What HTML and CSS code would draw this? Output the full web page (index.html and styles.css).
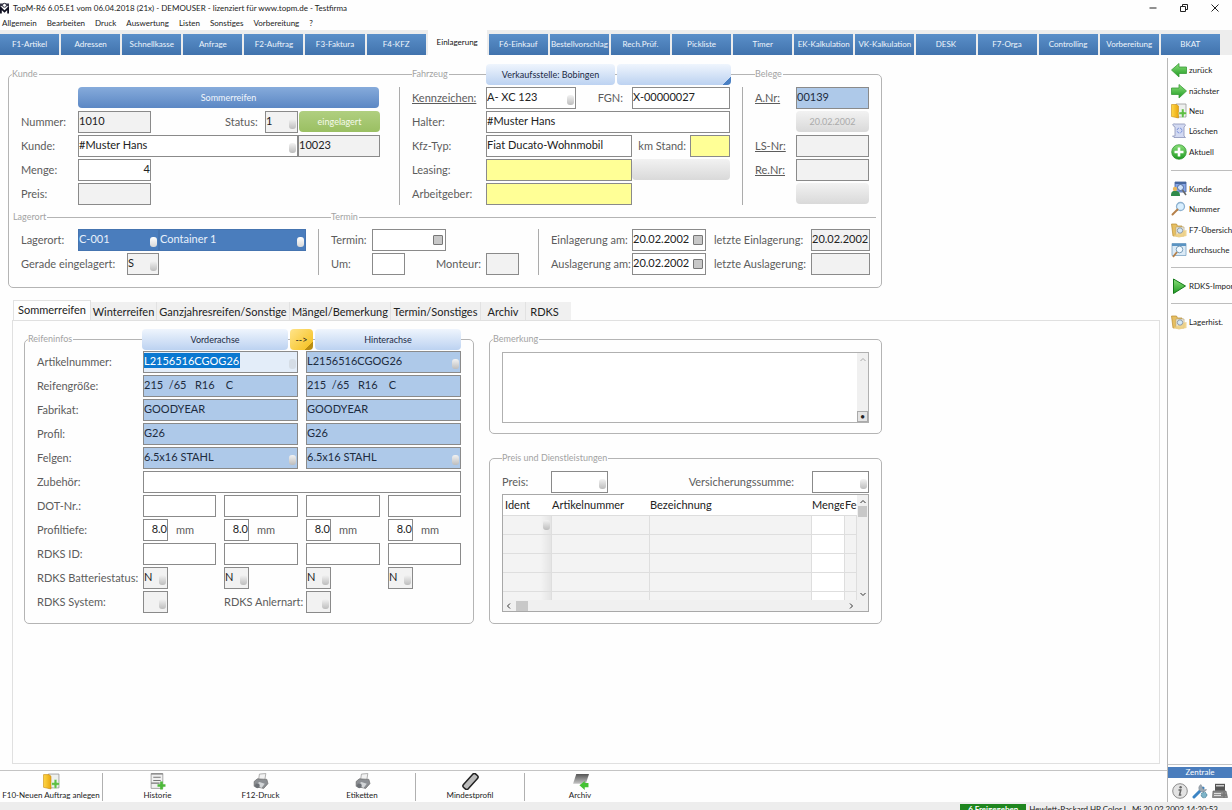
FILE: index.html
```html
<!DOCTYPE html>
<html lang="de">
<head>
<meta charset="utf-8">
<title>TopM-R6 – Einlagerung</title>
<link rel="stylesheet" href="styles.css">
</head>
<body>
<svg class="defs" aria-hidden="true">
  <defs>
    <linearGradient id="g-green" x1="0" y1="0" x2="0" y2="1"><stop offset="0" stop-color="#8be07a"/><stop offset="1" stop-color="#1f9a22"/></linearGradient>
    <linearGradient id="g-yellow" x1="0" y1="0" x2="1" y2="0"><stop offset="0" stop-color="#ffd84a"/><stop offset="1" stop-color="#e9a70e"/></linearGradient>
    <linearGradient id="g-grey" x1="0" y1="0" x2="0" y2="1"><stop offset="0" stop-color="#555"/><stop offset="1" stop-color="#c4c4c4"/></linearGradient>
  </defs>
  <symbol id="i-back" viewBox="0 0 16 16"><path d="M.5 8 8 1.5V5h7.5v6.500H8V15z" fill="url(#g-green)" stroke="#3a9a38" stroke-width=".8"/></symbol>
  <symbol id="i-next" viewBox="0 0 16 16"><path d="M15.500 8 8 1.500V5H.5v6.500H8V15z" fill="url(#g-green)" stroke="#3a9a38" stroke-width=".8"/></symbol>
  <symbol id="i-new" viewBox="0 0 16 16"><path d="M5 1h10v13H5z" fill="#eef0ee" stroke="#9a9a9a" stroke-width=".8"/><path d="M.5 1.500h5l2 1.500v12l-7-1.500z" fill="url(#g-yellow)" stroke="#c98e12" stroke-width=".6"/><path d="M10.500 6H13v3h2.500v2.500H13v3h-2.500v-3H8V9h2.500z" fill="#5fbf45" stroke="#fff" stroke-width=".4"/></symbol>
  <symbol id="i-delete" viewBox="0 0 16 16"><path d="M2 2.500C1 1 3 .5 4 1h8c2-.5 3 1 2 2l-1 1v9l1.500 1.500H3L1.500 13H4V4z" fill="#d3daf2" stroke="#8a93b8" stroke-width=".8"/><circle cx="8.500" cy="7.500" r="2.500" fill="none" stroke="#7f96dc" stroke-dasharray="3 1"/></symbol>
  <symbol id="i-plus" viewBox="0 0 16 16"><circle cx="8" cy="8" r="7.300" fill="url(#g-green)" stroke="#2b8f2b" stroke-width=".7"/><path d="M8 3.500v9M3.500 8h9" stroke="#fff" stroke-width="2.600"/></symbol>
  <symbol id="i-customer" viewBox="0 0 16 16"><path d="M4 1h11v10H4z" fill="#86a6e8" stroke="#44609c" stroke-width=".8"/><path d="M4 1h11v2H4z" fill="#46679f"/><circle cx="9.500" cy="6.500" r="3" fill="#cfe2fb" stroke="#50699a"/><path d="m11.500 9 3.500 5" stroke="#666" stroke-width="1.500"/><circle cx="4" cy="8" r="2.200" fill="#e9b65c"/><path d="M0 15c0-5 2-5 4-5s5 0 5 5z" fill="#2f8a4b"/></symbol>
  <symbol id="i-search" viewBox="0 0 16 16"><circle cx="9.500" cy="5.500" r="4" fill="#d8efff" stroke="#8fb2d0" stroke-width="1.300"/><path d="m6.500 8.500-5 5" stroke="#b5804a" stroke-width="2" stroke-linecap="round"/></symbol>
  <symbol id="i-folder" viewBox="0 0 16 16"><path d="M.5 2h5l1 2H11v9L2 14z" fill="#e6bf62" stroke="#b88a2e" stroke-width=".7"/><path d="M5 5h8v9H5z" fill="#f5f0e2" stroke="#b5a77f" stroke-width=".7"/><path d="m11 9 4.500-1v6L8 15.500 2 14z" fill="#efcf7f" opacity=".85"/><circle cx="9" cy="8.500" r="2.700" fill="#d3e8f7" stroke="#8e9aa8"/></symbol>
  <symbol id="i-browse" viewBox="0 0 16 16"><path d="M1 1.500h14v12H1z" fill="#dbeaf6" stroke="#7ea4c4" stroke-width=".8"/><path d="M1 1.500h14v2.500H1z" fill="#5a93c2"/><circle cx="8.500" cy="7.500" r="3.300" fill="#f3faff" stroke="#7c9fba"/><path d="m6 10-4 5" stroke="#b5804a" stroke-width="1.800"/></symbol>
  <symbol id="i-play" viewBox="0 0 16 16"><path d="M2.500 1v14.500L14.500 8z" fill="url(#g-green)" stroke="#157a1a"/></symbol>
  <symbol id="i-history" viewBox="0 0 16 16"><path d="M2 .5h11v14H2z" fill="#f0f0f0" stroke="#999" stroke-width=".8"/><path d="M2 1h11M4 4h7M4 7h7M2 9.500h8" stroke="#777"/><path d="M10.500 8h2.500v2.500h2.500V13H13v2.500h-2.500V13H8v-2.500h2.500z" fill="#4db83a"/></symbol>
  <symbol id="i-print" viewBox="0 0 16 16"><path d="m7 1 6-.5-1 6.500-6 .5z" fill="#f2f2f2" stroke="#999" stroke-width=".7"/><path d="m2 8 3-2.500 9 .5 1 4-4 4.500-9-2z" fill="#8d9094" stroke="#666" stroke-width=".6"/><path d="m3 11 4-2.500 5 1.500-3 4z" fill="#d3d6d8"/><circle cx="5" cy="12" r="2.300" fill="#6c7075"/></symbol>
  <symbol id="i-tread" viewBox="0 0 16 16"><rect x="5" y="-.5" width="6" height="17" rx="2" transform="rotate(42 8 8)" fill="#bbb" stroke="#222" stroke-width="1.400"/></symbol>
  <symbol id="i-archive" viewBox="0 0 16 16"><path d="M4 1h12l-3 9H1z" fill="url(#g-grey)"/><path d="m7 11.500 5-4v2h3.500v4H12v2.500z" fill="#45c234"/></symbol>
  <symbol id="i-info" viewBox="0 0 16 16"><circle cx="8" cy="8" r="7.300" fill="#e3e3e3" stroke="#8c8c8c"/><circle cx="8.600" cy="4.300" r="1.200" fill="#666"/><path d="M6.500 7h2.300l-1.300 5h1.800" fill="none" stroke="#666" stroke-width="1.500"/></symbol>
  <symbol id="i-tools" viewBox="0 0 16 16"><path d="M2 14 11 5" stroke="#3b84c4" stroke-width="3" stroke-linecap="round"/><path d="M9 1.500a4 4 0 1 0 5.500 5l-2.700.3L10.500 5z" fill="#9ea9b3" stroke="#77828c" stroke-width=".5"/><circle cx="12" cy="12" r="2.800" fill="#7db4c9" stroke="#4b8299" stroke-dasharray="1.500 .8"/></symbol>
  <symbol id="i-device" viewBox="0 0 16 16"><path d="M3 .8h10v7H3z" fill="#555"/><path d="M4 2h8v1.500H4z" fill="#ccc"/><path d="M1 8h13l1.500 6.500H.5z" fill="#8f8f8f" stroke="#555" stroke-width=".6"/><path d="M2 10.500h7M2 12.500h7" stroke="#ddd"/><path d="M12 9v6M9 12h6" stroke="#777" stroke-width="1.500"/></symbol>
  <symbol id="i-logo" viewBox="0 0 10 12"><path d="M0 1h10v3H0z" fill="#334"/><circle cx="5" cy="3" r="2.200" fill="#fff" stroke="#223"/><path d="M1 12V6l4 4 4-4v6" fill="none" stroke="#112" stroke-width="2"/></symbol>
</svg>

<header class="titlebar">
  <svg class="logo"><use href="#i-logo"/></svg>
  <h1>TopM-R6 6.05.E1 vom 06.04.2018 (21x) - DEMOUSER - lizenziert für www.topm.de - Testfirma</h1>
  <div class="window-buttons">
    <button aria-label="Minimieren"><svg viewBox="0 0 10 10"><path d="M1.500 5h7"/></svg></button>
    <button aria-label="Wiederherstellen"><svg viewBox="0 0 10 10"><path d="M1.500 3.500h5v5h-5zM3.500 3.500v-2h5v5h-2"/></svg></button>
    <button aria-label="Schließen"><svg viewBox="0 0 10 10"><path d="m1.500 1.500 7 7m0-7-7 7"/></svg></button>
  </div>
</header>
<nav class="menubar">
  <button>Allgemein</button><button>Bearbeiten</button><button>Druck</button><button>Auswertung</button><button>Listen</button><button>Sonstiges</button><button>Vorbereitung</button><button>?</button>
</nav>
<nav class="modules">
  <button>F1-Artikel</button><button>Adressen</button><button>Schnellkasse</button><button>Anfrage</button><button>F2-Auftrag</button><button>F3-Faktura</button><button>F4-KFZ</button><button class="active">Einlagerung</button><button>F6-Einkauf</button><button>Bestellvorschlag</button><button>Rech.Prüf.</button><button>Pickliste</button><button>Timer</button><button>EK-Kalkulation</button><button>VK-Kalkulation</button><button>DESK</button><button>F7-Orga</button><button>Controlling</button><button>Vorbereitung</button><button>BKAT</button>
</nav>

<div class="shell">
  <main class="workspace">
    <section class="panel order">
      <div class="order-top">
        <div class="order-col">
          <div class="panel-head"><span class="legend">Kunde</span></div>
          <div class="fields customer">
            <button class="btn blue c2-end">Sommerreifen</button>
            <label for="nummer">Nummer:</label><span class="field c2"><input id="nummer" class="readonly" value="1010"></span>
            <label for="status" class="c4">Status:</label><span class="field knob c5"><input id="status" class="readonly" value="1"></span>
            <button class="btn green c6">eingelagert</button>
            <label for="kunde">Kunde:</label><span class="field knob c2-6"><input id="kunde" value="#Muster Hans"></span><span class="field c6"><input aria-label="Kundennummer" class="readonly" value="10023"></span>
            <label for="menge">Menge:</label><span class="field c2"><input id="menge" class="num" value="4"></span>
            <label for="preis">Preis:</label><span class="field c2"><input id="preis" class="readonly"></span>
          </div>
        </div>
        <div class="order-col split">
          <div class="panel-head">
            <span class="legend">Fahrzeug</span>
            <div class="branch"><button class="btn pale">Verkaufsstelle: Bobingen</button><button class="btn pale corner" aria-label="Auswahl"></button></div>
          </div>
          <div class="fields vehicle">
            <label for="kennz" class="link">Kennzeichen:</label><span class="field knob c2"><input id="kennz" value="A- XC 123"></span>
            <label for="fgn" class="c3 right">FGN:</label><span class="field c4-end"><input id="fgn" value="X-00000027"></span>
            <label for="halter">Halter:</label><span class="field c2-end"><input id="halter" value="#Muster Hans"></span>
            <label for="typ">Kfz-Typ:</label><span class="field c2-4"><input id="typ" value="Fiat Ducato-Wohnmobil"></span>
            <label for="km" class="c4 right">km Stand:</label><span class="field c5"><input id="km" class="yellow"></span>
            <label for="leasing">Leasing:</label><span class="field c2-4"><input id="leasing" class="yellow"></span><button class="btn grey c4-end" aria-label="Leasing wählen"></button>
            <label for="arbeit">Arbeitgeber:</label><span class="field c2-4"><input id="arbeit" class="yellow"></span>
          </div>
        </div>
        <div class="order-col split">
          <div class="panel-head"><span class="legend">Belege</span></div>
          <div class="fields receipts">
            <label for="anr" class="link">A.Nr:</label><span class="field c2"><input id="anr" class="sky" value="00139"></span>
            <button class="btn grey c2">20.02.2002</button>
            <label for="lsnr" class="link">LS-Nr:</label><span class="field c2"><input id="lsnr" class="readonly"></span>
            <label for="renr" class="link">Re.Nr:</label><span class="field c2"><input id="renr" class="readonly"></span>
            <button class="btn grey c2" aria-label="Beleg"></button>
          </div>
        </div>
      </div>
      <div class="rule-row"><span class="legend">Lagerort</span><span class="legend">Termin</span></div>
      <div class="order-bottom">
        <div class="fields storage">
          <label for="lager">Lagerort:</label><span class="field knob bright c2-4"><input id="lager" class="deep" value="C-001"></span><span class="field knob bright c4"><input aria-label="Container" class="deep" value="Container 1"></span>
          <label for="gerade" class="c1-3">Gerade eingelagert:</label><span class="field knob c3"><input id="gerade" class="readonly" value="S"></span>
        </div>
        <div class="fields appointment split">
          <label for="termin">Termin:</label><span class="field date c2-4"><input id="termin"></span>
          <label for="um" class="c1">Um:</label><span class="field c2"><input id="um"></span>
          <label for="monteur" class="c3-5 right">Monteur:</label><span class="field c5"><input id="monteur" class="readonly"></span>
        </div>
        <div class="fields dates split">
          <label for="ein">Einlagerung am:</label><span class="field date c2"><input id="ein" value="20.02.2002"></span>
          <label for="lein" class="c3 inset">letzte Einlagerung:</label><span class="field c4"><input id="lein" class="readonly" value="20.02.2002"></span>
          <label for="aus">Auslagerung am:</label><span class="field date c2"><input id="aus" value="20.02.2002"></span>
          <label for="laus" class="c3 inset">letzte Auslagerung:</label><span class="field c4"><input id="laus" class="readonly"></span>
        </div>
      </div>
    </section>

    <div class="tabs" role="tablist">
      <button role="tab" class="active" aria-selected="true">Sommerreifen</button><button role="tab">Winterreifen</button><button role="tab">Ganzjahresreifen/Sonstige</button><button role="tab">Mängel/Bemerkung</button><button role="tab">Termin/Sonstiges</button><button role="tab">Archiv</button><button role="tab">RDKS</button>
    </div>
    <div class="tab-page">
      <section class="panel tyres">
        <div class="panel-head">
          <span class="legend">Reifeninfos</span>
          <div class="axles"><button class="btn pale">Vorderachse</button><button class="btn gold">--&gt;</button><button class="btn pale">Hinterachse</button></div>
        </div>
        <div class="fields tyre-grid">
          <label for="art">Artikelnummer:</label><span class="field knob faint front"><input id="art" class="focus" value="L2156516CGOG26"></span><span class="field knob rear"><input aria-label="Artikelnummer hinten" class="sky" value="L2156516CGOG26"></span>
          <label for="gr">Reifengröße:</label><span class="field front"><input id="gr" class="sky" value="215  /65   R16    C"></span><span class="field rear"><input aria-label="Reifengröße hinten" class="sky" value="215  /65   R16    C"></span>
          <label for="fab">Fabrikat:</label><span class="field front"><input id="fab" class="sky" value="GOODYEAR"></span><span class="field rear"><input aria-label="Fabrikat hinten" class="sky" value="GOODYEAR"></span>
          <label for="pro">Profil:</label><span class="field front"><input id="pro" class="sky" value="G26"></span><span class="field rear"><input aria-label="Profil hinten" class="sky" value="G26"></span>
          <label for="fel">Felgen:</label><span class="field knob front"><input id="fel" class="sky" value="6.5x16 STAHL"></span><span class="field knob rear"><input aria-label="Felgen hinten" class="sky" value="6.5x16 STAHL"></span>
          <label for="zub">Zubehör:</label><span class="field c2-end"><input id="zub"></span>
          <label for="dot">DOT-Nr.:</label><span class="field w1"><input id="dot"></span><span class="field w2"><input aria-label="DOT 2"></span><span class="field w3"><input aria-label="DOT 3"></span><span class="field w4"><input aria-label="DOT 4"></span>
          <label for="tiefe">Profiltiefe:</label><span class="field s1"><input id="tiefe" class="num" value="8.0"></span><span class="unit">mm</span><span class="field s2"><input aria-label="Profiltiefe 2" class="num" value="8.0"></span><span class="unit">mm</span><span class="field s3"><input aria-label="Profiltiefe 3" class="num" value="8.0"></span><span class="unit">mm</span><span class="field s4"><input aria-label="Profiltiefe 4" class="num" value="8.0"></span><span class="unit">mm</span>
          <label for="rid">RDKS ID:</label><span class="field w1"><input id="rid"></span><span class="field w2"><input aria-label="RDKS ID 2"></span><span class="field w3"><input aria-label="RDKS ID 3"></span><span class="field w4"><input aria-label="RDKS ID 4"></span>
          <label for="bat">RDKS Batteriestatus:</label><span class="field knob s1"><input id="bat" class="readonly" value="N"></span><span class="field knob s2"><input aria-label="Batteriestatus 2" class="readonly" value="N"></span><span class="field knob s3"><input aria-label="Batteriestatus 3" class="readonly" value="N"></span><span class="field knob s4"><input aria-label="Batteriestatus 4" class="readonly" value="N"></span>
          <label for="sys">RDKS System:</label><span class="field knob s1"><input id="sys" class="readonly"></span><label for="anl" class="w2">RDKS Anlernart:</label><span class="field knob s3"><input id="anl" class="readonly"></span>
        </div>
      </section>
      <div class="side-panels">
        <section class="panel">
          <div class="panel-head short"><label class="legend" for="bem">Bemerkung</label></div>
          <div class="memo">
            <textarea id="bem"></textarea>
            <div class="vscroll"><svg viewBox="0 0 8 8"><path d="m1.500 5 2.500-2.500L6.500 5"/></svg><button aria-label="Mehr">•</button></div>
          </div>
        </section>
        <section class="panel">
          <div class="panel-head services-head"><span class="legend">Preis und Dienstleistungen</span></div>
          <div class="fields services">
            <label for="p2">Preis:</label><span class="field knob c2"><input id="p2"></span>
            <label for="vs" class="c3 right">Versicherungssumme:</label><span class="field knob c4"><input id="vs"></span>
          </div>
          <div class="grid-box">
            <div class="table-clip">
              <table>
                <colgroup><col class="k1"><col class="k2"><col class="k3"><col class="k4"><col class="k5"></colgroup>
                <thead><tr><th>Ident</th><th>Artikelnummer</th><th>Bezeichnung</th><th>Menge</th><th>Fe</th></tr></thead>
                <tbody>
                  <tr><td><span class="cell-knob"></span></td><td></td><td></td><td></td><td></td></tr>
                  <tr><td></td><td></td><td></td><td></td><td></td></tr>
                  <tr><td></td><td></td><td></td><td></td><td></td></tr>
                  <tr><td></td><td></td><td></td><td></td><td></td></tr>
                  <tr><td></td><td></td><td></td><td></td><td></td></tr>
                </tbody>
              </table>
            </div>
            <div class="vscroll dark"><svg viewBox="0 0 8 8"><path d="m1.500 5 2.500-2.500L6.500 5"/></svg><i class="thumb"></i><svg class="last" viewBox="0 0 8 8"><path d="M1.500 3 4 5.500 6.500 3"/></svg></div>
            <div class="hscroll"><svg viewBox="0 0 8 8"><path d="M5 1.500 2.500 4 5 6.500"/></svg><i class="thumb"></i><svg class="last" viewBox="0 0 8 8"><path d="M3 1.500 5.500 4 3 6.500"/></svg></div>
          </div>
        </section>
      </div>
    </div>

    <div class="toolbar">
      <button><svg><use href="#i-new"/></svg>F10-Neuen Auftrag anlegen</button>
      <button class="sep"><svg><use href="#i-history"/></svg>Historie</button>
      <button><svg><use href="#i-print"/></svg>F12-Druck</button>
      <button><svg><use href="#i-print"/></svg>Etiketten</button>
      <button class="sep"><svg><use href="#i-tread"/></svg>Mindestprofil</button>
      <button class="sep"><svg><use href="#i-archive"/></svg>Archiv</button>
    </div>
  </main>

  <aside class="sidebar">
    <div class="side-group five">
      <button><svg><use href="#i-back"/></svg>zurück</button>
      <button><svg><use href="#i-next"/></svg>nächster</button>
      <button><svg><use href="#i-new"/></svg>Neu</button>
      <button><svg><use href="#i-delete"/></svg>Löschen</button>
      <button><svg><use href="#i-plus"/></svg>Aktuell</button>
    </div>
    <div class="side-group four">
      <button><svg><use href="#i-customer"/></svg>Kunde</button>
      <button><svg><use href="#i-search"/></svg>Nummer</button>
      <button><svg><use href="#i-folder"/></svg>F7-Übersich</button>
      <button><svg><use href="#i-browse"/></svg>durchsuche</button>
    </div>
    <div class="side-group"><button><svg><use href="#i-play"/></svg>RDKS-Impor</button></div>
    <div class="side-group"><button><svg><use href="#i-folder"/></svg>Lagerhist.</button></div>
    <div class="central">
      <h2>Zentrale</h2>
      <div class="central-icons">
        <button aria-label="Info"><svg><use href="#i-info"/></svg></button>
        <button aria-label="Werkzeuge"><svg><use href="#i-tools"/></svg></button>
        <button aria-label="Gerät"><svg><use href="#i-device"/></svg></button>
      </div>
    </div>
  </aside>
</div>
<footer class="statusbar"><span class="free">6 Freigegeben</span><span>Hewlett-Packard HP Color L</span><span class="clock">Mi 20.02.2002 14:20:53</span></footer>
</body>
</html>
```
FILE: styles.css
```css
* { box-sizing: border-box; }

body {
  margin: 0;
  height: 100vh;
  display: flex;
  flex-direction: column;
  overflow: hidden;
  background: #fefefe;
  color: #222;
  font-family: Lato, "Open Sans", sans-serif;
  font-size: 11px;
}

button, input, textarea { font: inherit; color: inherit; margin: 0; }
button { border: 0; padding: 0; background: none; white-space: nowrap; }
.defs { position: absolute; width: 0; height: 0; }

/* Window chrome */
.titlebar { display: flex; align-items: center; height: 15px; flex: none; }
.titlebar .logo { width: 9px; height: 12px; }
.titlebar h1 { margin: 0 auto 0 4px; font-size: 8px; font-weight: 400; white-space: nowrap; }
.window-buttons { display: flex; gap: 21px; padding-right: 12px; }
.window-buttons svg { display: block; width: 10px; height: 10px; fill: none; stroke: #222; }
.menubar { display: flex; gap: 10px; height: 15px; flex: none; padding-left: 2px; font-size: 8px; }
.modules {
  display: flex;
  gap: 2px;
  height: 25px;
  flex: none;
  padding: 4px 12px 0 0;
  background: #ededed;
  font-size: 8px;
}
.modules button {
  flex: 1 1 0;
  min-width: 0;
  overflow: hidden;
  padding-bottom: 2px;
  background: linear-gradient(#5a8fc9, #4173ad);
  color: #eef5fc;
}
.modules .active { margin-top: -4px; background: #fefefe; color: #111; }

.shell { display: flex; flex: 1; min-height: 0; }
.workspace { flex: 1; min-width: 0; display: flex; flex-direction: column; padding-top: 19px; }

/* Framed panels with captions on the frame */
.panel { border: 1px solid #b4b4b4; border-radius: 5px; }
.panel-head { display: flex; align-items: center; height: 20px; margin-top: -11px; }
.legend { background: #fefefe; color: #a3a3a3; font-size: 9px; line-height: 12px; padding-right: 1px; }
.panel-head > .legend { margin-left: 3px; }

.fields { display: grid; gap: 2px 0; grid-auto-rows: 22px; align-content: start; }
.fields label, .unit { color: #5c5c5c; line-height: 22px; white-space: nowrap; }
.fields label { grid-column-start: 1; }
.fields .link { text-decoration: underline; }
.fields .right { text-align: right; padding-right: 4px; }
.fields .inset { padding-left: 8px; }

.field { position: relative; display: block; }
.field input {
  display: block;
  width: 100%;
  height: 22px;
  border: 1px solid #8a8a8a;
  border-radius: 0;
  padding: 0 0 4px;
  background: #fff;
  color: #222;
}
.field .readonly { background: #f2f2f2; }
.field .yellow { background: #ffff96; }
.field .sky { background: #aec9e9; color: #1d2c40; }
.field .deep { background: #4a7dbd; border-color: #4574b0; color: #e8f1fb; }
.field .num { text-align: right; }
.field .focus { color: #fff; background: linear-gradient(#0a78d0, #0a78d0) 0 1px / 96px 15px no-repeat #e3edf9; }
.knob::after, .date::after, .cell-knob {
  content: "";
  position: absolute;
  right: 2px;
  bottom: 4px;
  width: 7px;
  height: 10px;
  border-radius: 3px;
  background: linear-gradient(#f2f2f2, #bdbdbd);
}
.knob.bright::after { background: linear-gradient(#fff, #d8d8d8); }
.knob.faint::after { background: #d5dde6; }
.date::after { right: 3px; width: 8px; height: 8px; bottom: 6px; border: 1px solid #777; border-radius: 1px; background: #c8c8c8; }

.fields .c1 { grid-column: 1; }
.fields .c2 { grid-column: 2; }
.fields .c3 { grid-column: 3; }
.fields .c4 { grid-column: 4; }
.fields .c5 { grid-column: 5; }
.fields .c6 { grid-column: 6; }
.fields .c1-3 { grid-column: 1 / 3; }
.fields .c2-4 { grid-column: 2 / 4; }
.fields .c2-6 { grid-column: 2 / 6; }
.fields .c3-5 { grid-column: 3 / 5; }
.fields .c2-end { grid-column: 2 / -1; }
.fields .c4-end { grid-column: 4 / -1; }

.btn { height: 21px; border-radius: 4px; font-size: 9px; }
.btn.blue { background: linear-gradient(#86abdb, #5b87c4); color: #f1f6fc; }
.btn.green { background: linear-gradient(#b0cf80, #9abf62); color: #f5faea; margin-left: 1px; }
.btn.grey { background: linear-gradient(#f2f2f2, #d9d9d9); color: #ababab; }
.btn.pale { background: linear-gradient(#eff5fd, #bcd2f1); color: #1c2a45; }
.btn.gold { background: linear-gradient(135deg, #ffe48a, #f7c62f 80%, #b98d12 80%); color: #222; }
.btn.corner { background: linear-gradient(135deg, transparent 94%, #4a80c4 94%), linear-gradient(#eff5fd, #bcd2f1); }

/* Storage order */
.order { width: 100%; max-width: 874px; margin-left: 8px; padding-bottom: 12px; }
.order-top { display: grid; grid-template-columns: 391px 343px 1fr; }
.order-top .fields, .order-bottom .split { position: relative; }
.order-col .fields { margin: 3px 0 0 12px; }
.order-col.split .fields::before, .order-bottom .split::before {
  content: "";
  position: absolute;
  left: -13px;
  top: 0;
  bottom: 0;
  border-left: 1px solid #ababab;
}
.order-col.split .legend { margin-left: 12px; }
.branch { display: grid; grid-template-columns: 129px 114px; gap: 2px; margin-left: auto; padding-right: 12px; }
.customer { grid-template-columns: 57px 73px 74px 40px 33px 82px; }
.customer .btn.blue { margin-right: 1px; }
.vehicle { grid-template-columns: 74px 90px 56px 58px 40px; }
.vehicle .c3.right { padding-right: 9px; }
.receipts { grid-template-columns: 41px 73px; }
.rule-row { display: grid; grid-template-columns: 318px 1fr; height: 24px; align-items: center; margin: 0 5px 0 4px;
  background: linear-gradient(#b4b4b4, #b4b4b4) 0 12px / 100% 1px no-repeat; }
.rule-row .legend { justify-self: start; }
.order-bottom { display: flex; gap: 25px; padding-left: 12px; }
.storage { grid-template-columns: 57px 49px 32px 147px; }
.appointment { grid-template-columns: 41px 33px 41px 40px 33px; }
.appointment .right { padding-right: 5px; }
.dates { grid-template-columns: 81px 74px 105px 59px; margin-left: 7px; }

/* Tab control */
.tabs { display: grid; grid-template-columns: 78px 66px 133px 101px 90px 45px 45px; height: 20px; margin: 12px 0 0 13px; flex: none; align-items: end; }
.tabs button { height: 18px; background: #f0f0f0; border-right: 1px solid #e2e2e2; text-align: center; }
.tabs .active { height: 20px; background: #fefefe; border: 1px solid #e2e2e2; border-bottom: 0; padding-bottom: 2px; }
.tabs button:last-child { border: 0; padding-right: 8px; }
.tab-page {
  flex: 1;
  min-height: 0;
  display: flex;
  align-items: flex-start;
  gap: 15px;
  margin: 0 7px 6px 12px;
  padding: 18px 0 0 11px;
  border: 1px solid #e0e0e0;
}
.tyres { flex: 0 1 450px; padding-bottom: 10px; }
.axles { display: grid; grid-template-columns: 146px 23px 146px; gap: 2px; margin-left: auto; padding-right: 12px; }
.tyre-grid { grid-template-columns: 106px 25px 48px 8px 25px 49px 8px 25px 49px 8px 25px 48px; margin: 2px 0 0 12px; }
.field.front { grid-column: 2 / 7; }
.field.rear { grid-column: 8 / -1; }
.tyre-grid .w1 { grid-column: 2 / 4; }
.tyre-grid .w2 { grid-column: 5 / 7; }
.tyre-grid .w3 { grid-column: 8 / 10; }
.tyre-grid .w4 { grid-column: 11 / 13; }
.tyre-grid .s1 { grid-column: 2; }
.tyre-grid .s2 { grid-column: 5; }
.tyre-grid .s3 { grid-column: 8; }
.tyre-grid .s4 { grid-column: 11; }
.unit { padding-left: 8px; }
.tyre-grid input { white-space: pre; }

.side-panels { flex: 0 1 393px; display: flex; flex-direction: column; gap: 24px; }
.memo { display: grid; grid-template-columns: 1fr 11px; height: 71px; margin: 3px 12px 10px; border: 1px solid #b0b0b0; }
.memo textarea { border: 0; resize: none; background: #fff; min-width: 0; }
.vscroll { display: flex; flex-direction: column; align-items: center; justify-content: space-between; background: #f0f0f0; padding-top: 3px; }
.vscroll svg, .hscroll svg { width: 8px; height: 8px; fill: none; stroke: #aaa; }
.vscroll button { width: 11px; height: 11px; border: 1px solid #aaa; background: #e4e4e4; font-size: 9px; line-height: 9px; }
.services-head .legend { margin-left: 12px; }
.services { grid-template-columns: 49px 57px 204px 57px; margin: 3px 12px 1px; }
.services .right { padding-right: 18px; }
.grid-box { display: grid; grid-template-columns: 1fr 11px; grid-template-rows: 105px 11px; margin: 0 12px 11px; border: 1px solid #a8a8a8; background: #f0f0f0; }
.table-clip { overflow: hidden; background: #fff; }
table { width: 100%; table-layout: fixed; border-collapse: collapse; }
.k1 { width: 48px; } .k2 { width: 98px; } .k3 { width: 162px; } .k4 { width: 33px; }
th { height: 20px; padding: 0 0 0 1px; font-weight: 400; text-align: left; overflow: hidden; white-space: nowrap; border-bottom: 1px solid #ddd; }
th:first-child { padding-left: 2px; }
td { position: relative; height: 19px; padding: 0; background: #f3f3f3; border: 1px solid #dedede; border-width: 0 1px 1px 0; }
td:first-child { background: linear-gradient(90deg, #f3f3f3 78%, #e4e4e4); }
td:nth-child(4) { background: #fff; }
.cell-knob { right: 1px; }
.dark svg, .hscroll svg { stroke: #333; }
.dark .thumb { width: 9px; height: 11px; background: #c8c8c8; }
.vscroll .last { margin-top: auto; margin-bottom: 2px; }
.hscroll { grid-column: 1 / -1; display: flex; align-items: center; padding: 0 13px 0 2px; }
.hscroll .thumb { width: 12px; height: 10px; margin-left: 3px; background: #c8c8c8; }
.hscroll .last { margin-left: auto; }

/* Bottom toolbar */
.toolbar {
  display: grid;
  grid-template-columns: 102px 110px 97px 106px 109px 111px;
  flex: none;
  height: 32px;
  padding: 2px 0 1px;
  border-top: 1px solid #c4c4c4;
}
.toolbar button { display: flex; flex-direction: column; align-items: center; font-size: 8px; line-height: 10px; }
.toolbar svg { width: 17px; height: 17px; flex: none; }
.toolbar .sep { border-left: 1px solid #b0b0b0; }

/* Sidebar */
.sidebar { flex: 0 0 65px; display: flex; flex-direction: column; margin-top: 3px; border-left: 1px solid #b8b8b8; overflow: hidden; }
.side-group { display: grid; grid-auto-rows: 1fr; height: 20px; flex: none; margin: 0 0 8px 3px; }
.side-group + .side-group { border-top: 1px solid #bdbdbd; padding-top: 8px; height: 28px; }
.side-group.five { height: 102px; margin-top: 2px; }
.side-group + .side-group.four { height: 90px; margin-bottom: 7px; }
.side-group button { display: flex; align-items: center; gap: 2px; font-size: 8px; }
.side-group svg { width: 16px; height: 16px; flex: none; }
.central { margin-top: auto; border-top: 1px solid #c4c4c4; padding-top: 2px; }
.central h2 { margin: 0; background: #4a7dbd; color: #fff; font-size: 8px; font-weight: 400; line-height: 11px; text-align: center; }
.central-icons { display: flex; gap: 4px; justify-content: center; padding: 5px 0 3px; }
.central-icons svg { display: block; width: 16px; height: 16px; }

.statusbar { flex: none; display: flex; justify-content: flex-end; height: 8px; padding: 2px 14px 0 0; background: #ededed; font-size: 8px; line-height: 11px; white-space: nowrap; overflow: hidden; }
.statusbar span { height: 11px; }
.statusbar .free { width: 66px; margin-right: 3px; background: #1f861f; color: #fff; font-weight: 700; text-align: center; }
.statusbar .clock { margin-left: 4px; }
```
